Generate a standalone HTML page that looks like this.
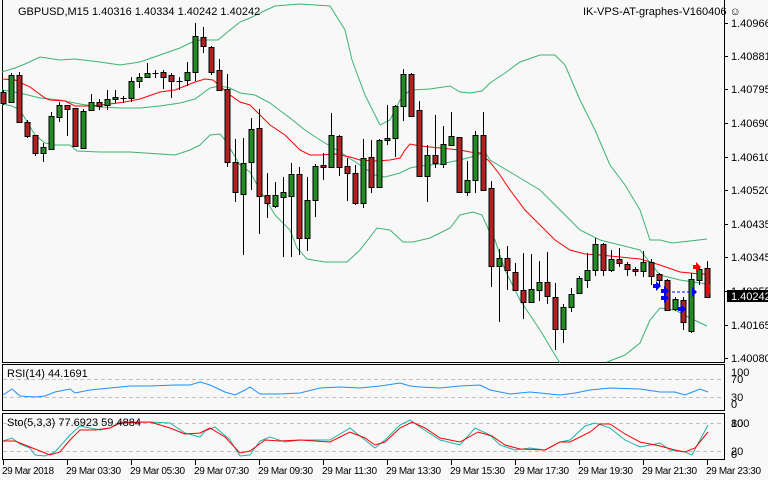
<!DOCTYPE html>
<html><head><meta charset="utf-8"><style>
body{margin:0;width:768px;height:480px;overflow:hidden;background:#f8f8f8;font-family:"Liberation Sans",sans-serif}
svg{display:block}
text{font-family:"Liberation Sans",sans-serif;font-size:11px;fill:#000}
.t text{font-size:10px}
</style></head><body>
<svg id="s" width="768" height="480" viewBox="0 0 768 480" xmlns="http://www.w3.org/2000/svg" shape-rendering="crispEdges">
<rect width="768" height="480" fill="#f8f8f8"/>
<g fill="none" stroke="#000">
<rect x="2.5" y="-1" width="722" height="363.5"/>
<rect x="2.5" y="364.5" width="722" height="46"/>
<rect x="2.5" y="413.5" width="722" height="46"/>
</g>
<g stroke="#c0c0c0" stroke-dasharray="4,3">
<line x1="3" y1="379.5" x2="724" y2="379.5"/><line x1="3" y1="397.5" x2="724" y2="397.5"/>
<line x1="3" y1="423.5" x2="724" y2="423.5"/><line x1="3" y1="451.5" x2="724" y2="451.5"/>
</g>
<g fill="none" shape-rendering="auto" stroke-width="1">
<polyline stroke="#3cb371" points="2,72 15,68 25,64 40,57 60,60 75,59 100,62 120,65 140,62 160,55 180,48 190,43 200,40 218,40 230,30 240,22 250,18 262,12 275,6 300,4 330,6 345,30 352,60 365,95 380,125 390,120 400,100 410,90 430,89 450,86 460,92 470,93 482,91 490,83 505,73 520,62 540,55 555,55 565,65 580,100 595,130 610,165 625,185 640,210 650,240 660,240 672,243 690,241 707,239"/>
<polyline stroke="#3cb371" points="2,90 20,93 40,98 60,100 80,104 100,107 120,108 140,108 160,106 180,103 195,99 210,88 220,86 230,88 240,93 255,95 270,103 290,118 305,130 320,140 340,152 360,165 375,175 385,177 400,173 410,168 420,166 440,164 460,160 475,156 485,152 490,160 515,175 540,190 560,210 580,230 600,240 620,245 640,250 660,275 680,280 700,283 707,284"/>
<polyline stroke="#3cb371" points="2,104 12,106 20,110 35,135 45,143 55,145 70,145 77,151 100,152 130,152 160,154 175,155 190,150 200,145 210,135 220,134 225,140 240,165 250,172 260,190 275,215 290,230 297,248 307,259 325,262 347,262 360,250 377,228 390,230 403,242 413,242 430,238 450,228 460,215 473,212 482,215 490,233 495,240 505,270 520,300 540,330 555,355 560,363"/>
<polyline stroke="#3cb371" points="607,362 625,355 640,343 650,320 660,308 675,310 690,318 707,326"/>
<polyline stroke="#ff0000" points="2,79 15,80 30,87 45,98 50,100 65,101 75,106 90,106 110,104 125,102 140,99 160,92 175,90 185,86 195,82 205,79 213,80 220,86 230,95 240,102 250,105 260,115 270,125 285,135 290,140 300,150 310,155 320,155 335,154 350,157 360,160 375,161 390,160 400,158 405,150 410,144 420,146 440,148 460,150 470,152 480,153 490,162 500,175 510,190 525,210 540,225 555,240 570,250 585,254 600,255 620,257 640,259 660,265 680,272 700,274 710,274"/>
<polyline stroke="#1e90ff" points="3,395 12,389 20,396 35,397 45,396 55,392 70,389 75,393 90,390 110,388 130,386 150,386 175,385 190,385 200,382 210,385 225,392 235,395 245,390 250,387 260,394 280,394 300,393 320,388 340,387 360,388 380,386 400,383 410,386 420,387 440,388 460,386 480,385 490,390 510,394 530,392 550,394 560,395 575,393 590,390 610,388 640,389 660,392 675,392 685,395 690,393 700,389 708,392"/>
<polyline stroke="#20b2aa" points="3,441 12,438 20,444 30,448 35,455 45,456 55,452 70,435 80,426 100,430 110,428 120,422 150,422 170,423 185,433 200,437 205,431 215,427 230,440 240,456 250,455 260,441 270,437 285,442 300,440 330,440 350,428 365,440 375,448 385,440 400,425 410,420 420,427 440,440 460,445 475,428 490,435 500,445 515,450 530,448 545,450 560,442 570,440 585,426 595,423 610,428 625,440 640,447 650,445 660,443 670,450 685,452 692,455 700,440 708,425"/>
<polyline stroke="#ff0000" points="3,441 15,441 30,447 50,455 60,452 70,440 80,430 95,430 110,428 120,423 150,422 170,428 185,434 200,433 210,428 225,437 240,453 250,451 265,440 280,441 300,440 330,442 350,432 365,438 375,445 385,442 400,428 412,422 425,428 440,438 460,442 478,432 492,436 505,445 520,449 545,450 560,442 570,442 590,432 600,424 610,424 625,434 640,442 660,446 675,450 685,452 695,448 708,432"/>
</g>
<g id="c"></g>
<g shape-rendering="auto">
<line x1="672" y1="292" x2="692" y2="292" stroke="#0000ff" stroke-dasharray="3,2"/>
<g fill="#0000ff">
<path d="M653,284 h3 v-3 l5,5 l-5,5 v-3 h-3z"/>
<path d="M661,289 h3 v-3 l5,5 l-5,5 v-3 h-3z"/>
<path d="M661,296 h3 v-3 l5,5 l-5,5 v-3 h-3z"/>
<path d="M678,307 h3 v-3 l5,5 l-5,5 v-3 h-3z"/>
<path d="M697,292 l-5,-5 v10z"/>
</g>
<path d="M693,265 h3 v-3 l5,5 l-5,5 v-3 h-3z" fill="#ff0000"/>
<path d="M705,289 l5,-5 v10z" fill="#ff0000"/>
</g>
<g stroke="#000"><line x1="724" y1="23.5" x2="728" y2="23.5"/><line x1="724" y1="56.5" x2="728" y2="56.5"/><line x1="724" y1="89.5" x2="728" y2="89.5"/><line x1="724" y1="123.5" x2="728" y2="123.5"/><line x1="724" y1="157.5" x2="728" y2="157.5"/><line x1="724" y1="190.5" x2="728" y2="190.5"/><line x1="724" y1="224.5" x2="728" y2="224.5"/><line x1="724" y1="257.5" x2="728" y2="257.5"/><line x1="724" y1="291.5" x2="728" y2="291.5"/><line x1="724" y1="325.5" x2="728" y2="325.5"/><line x1="724" y1="358.5" x2="728" y2="358.5"/></g>
<g>
<text x="731" y="27">1.40966</text><text x="731" y="60">1.40881</text><text x="731" y="93">1.40795</text><text x="731" y="127">1.40690</text><text x="731" y="161">1.40610</text><text x="731" y="194">1.40520</text><text x="731" y="228">1.40435</text><text x="731" y="261">1.40345</text><text x="731" y="295">1.40255</text><text x="731" y="329">1.40165</text><text x="731" y="362">1.40080</text>
</g>
<rect x="727" y="290" width="41" height="12" fill="#000"/>
<text x="731" y="300" style="fill:#fff">1.40242</text>
<text x="731" y="376">100</text><text x="731" y="383">70</text><text x="731" y="401">30</text><text x="731" y="408">0</text>
<text x="731" y="427">100</text><text x="731" y="427">80</text><text x="731" y="455">20</text><text x="731" y="458">0</text>
<text x="18" y="15">GBPUSD,M15  1.40316 1.40334 1.40242 1.40242</text>
<text x="583" y="15">IK-VPS-AT-graphes-V160406 ☺</text>
<text x="7" y="377">RSI(14) 44.1691</text>
<text x="7" y="426">Sto(5,3,3) 77.6923 59.4884</text>
<g stroke="#000"><line x1="3.5" y1="460" x2="3.5" y2="465"/><line x1="67.5" y1="460" x2="67.5" y2="465"/><line x1="131.5" y1="460" x2="131.5" y2="465"/><line x1="195.5" y1="460" x2="195.5" y2="465"/><line x1="259.5" y1="460" x2="259.5" y2="465"/><line x1="323.5" y1="460" x2="323.5" y2="465"/><line x1="387.5" y1="460" x2="387.5" y2="465"/><line x1="451.5" y1="460" x2="451.5" y2="465"/><line x1="515.5" y1="460" x2="515.5" y2="465"/><line x1="579.5" y1="460" x2="579.5" y2="465"/><line x1="643.5" y1="460" x2="643.5" y2="465"/><line x1="707.5" y1="460" x2="707.5" y2="465"/></g>
<g class="t">
<text x="2" y="474" textLength="52">29 Mar 2018</text><text x="66" y="474" textLength="55">29 Mar 03:30</text><text x="130" y="474" textLength="55">29 Mar 05:30</text><text x="194" y="474" textLength="55">29 Mar 07:30</text><text x="258" y="474" textLength="55">29 Mar 09:30</text><text x="322" y="474" textLength="55">29 Mar 11:30</text><text x="386" y="474" textLength="55">29 Mar 13:30</text><text x="450" y="474" textLength="55">29 Mar 15:30</text><text x="514" y="474" textLength="55">29 Mar 17:30</text><text x="578" y="474" textLength="55">29 Mar 19:30</text><text x="642" y="474" textLength="55">29 Mar 21:30</text><text x="706" y="474" textLength="55">29 Mar 23:30</text>
</g>
</svg>
<script>
var d=[[92,103,90,105,'R'],[75,102,73,103,'G'],[75,122,72,122,'R'],[122,136,120,138,'R'],[135,153,135,156,'R'],[147,153,143,162,'G'],[116,149,112,150,'G'],[105,117,102,122,'G'],[105,109,105,136,'R'],[108,146,108,146,'R'],[111,148,109,149,'G'],[102,110,94,111,'G'],[102,106,99,110,'R'],[99,105,90,110,'G'],[97,99,90,103,'G'],[98,98,96,103,'D'],[81,98,77,102,'G'],[77,81,73,88,'G'],[73,77,63,78,'G'],[73,73,70,78,'D'],[72,77,70,89,'R'],[75,81,73,98,'R'],[81,81,77,90,'D'],[72,80,62,86,'G'],[36,72,23,81,'G'],[37,46,27,53,'R'],[47,72,46,75,'R'],[70,90,59,91,'R'],[89,162,74,167,'R'],[162,192,139,202,'R'],[163,194,138,255,'G'],[129,162,118,190,'G'],[128,196,109,234,'R'],[195,203,173,218,'R'],[195,206,182,208,'G'],[192,197,177,257,'G'],[174,196,163,257,'G'],[174,238,167,255,'R'],[200,238,177,251,'G'],[166,200,164,217,'G'],[165,167,153,180,'R'],[135,167,113,168,'G'],[136,167,135,176,'R'],[166,173,158,201,'R'],[173,203,165,205,'R'],[158,203,139,208,'G'],[157,187,140,193,'R'],[140,187,139,188,'G'],[138,140,105,145,'G'],[106,138,105,157,'G'],[74,106,69,121,'G'],[74,116,73,117,'R'],[110,176,101,177,'R'],[155,176,145,202,'G'],[155,163,115,168,'R'],[144,164,126,168,'G'],[136,145,112,146,'G'],[137,192,137,193,'R'],[180,192,161,196,'G'],[135,180,131,193,'G'],[135,190,112,191,'R'],[188,266,181,287,'R'],[258,266,249,322,'G'],[258,270,246,290,'R'],[272,290,263,291,'R'],[290,302,253,319,'R'],[289,302,254,303,'G'],[282,290,261,301,'G'],[282,296,252,304,'R'],[297,329,283,350,'R'],[307,329,304,343,'G'],[294,307,288,312,'G'],[278,293,276,294,'G'],[270,280,253,288,'G'],[244,270,238,276,'G'],[244,270,243,276,'R'],[259,270,250,272,'G'],[259,263,248,267,'R'],[264,269,262,276,'R'],[269,271,267,276,'R'],[262,271,251,277,'G'],[262,276,259,285,'R'],[274,280,273,286,'R'],[280,310,279,311,'R'],[299,309,297,311,'G'],[300,322,297,330,'R'],[279,331,273,333,'G'],[269,280,268,285,'G'],[268,297,261,297,'R']];
var s='';
for(var i=0;i<d.length;i++){var c=d[i],x=3.5+8*i;
s+='<line x1="'+x+'" y1="'+c[2]+'" x2="'+x+'" y2="'+c[3]+'" stroke="#000"/>';
if(c[4]=='D'){s+='<line x1="'+(x-3)+'" y1="'+(c[0]+.5)+'" x2="'+(x+3)+'" y2="'+(c[0]+.5)+'" stroke="#000"/>';}
else{var h=Math.max(c[1]-c[0],1);s+='<rect x="'+(x-2.5)+'" y="'+(c[0]+.5)+'" width="5" height="'+h+'" fill="'+(c[4]=='G'?'#228b22':'#b22222')+'" stroke="#000"/>';}}
document.getElementById('c').innerHTML=s;
</script>
</body></html>
